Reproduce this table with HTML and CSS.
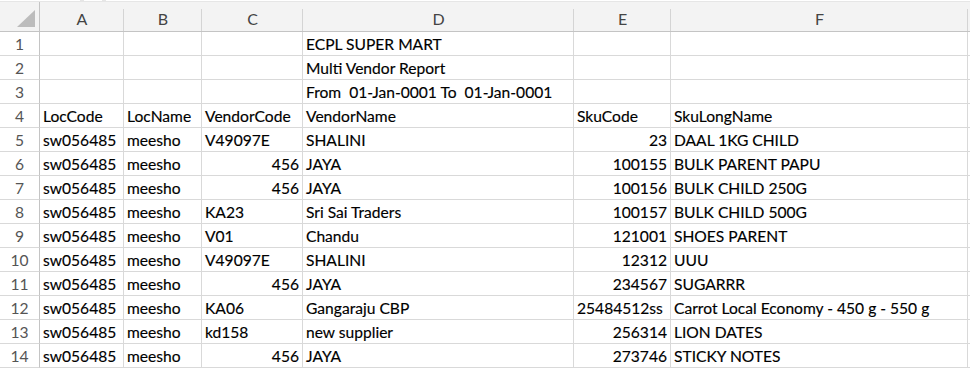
FILE: index.html
```html
<!DOCTYPE html>
<html>
<head>
<meta charset="utf-8">
<link rel="stylesheet" href="styles.css">
</head>
<body>
<div class="topstrip"><span class="tb tb1"></span><span class="tb tb2"></span><span class="tb tb3"></span></div>
<div class="sheet">
  <div class="corner"><svg width="19" height="18" viewBox="0 0 19 18"><polygon points="18,0 18,17 0,17" fill="#bcbcbc"/></svg></div>
  <div class="ch">A</div><div class="ch">B</div><div class="ch">C</div><div class="ch">D</div><div class="ch">E</div><div class="ch">F</div><div class="ch ch-last"></div>

  <div class="rh">1</div><div class="c"></div><div class="c"></div><div class="c"></div><div class="c">ECPL SUPER MART</div><div class="c"></div><div class="c"></div><div class="c g"></div>
  <div class="rh">2</div><div class="c"></div><div class="c"></div><div class="c"></div><div class="c">Multi Vendor Report</div><div class="c"></div><div class="c"></div><div class="c g"></div>
  <div class="rh">3</div><div class="c"></div><div class="c"></div><div class="c"></div><div class="c">From  01-Jan-0001 To  01-Jan-0001</div><div class="c"></div><div class="c"></div><div class="c g"></div>
  <div class="rh">4</div><div class="c">LocCode</div><div class="c">LocName</div><div class="c">VendorCode</div><div class="c">VendorName</div><div class="c">SkuCode</div><div class="c">SkuLongName</div><div class="c g"></div>
  <div class="rh">5</div><div class="c">sw056485</div><div class="c">meesho</div><div class="c">V49097E</div><div class="c">SHALINI</div><div class="c n">23</div><div class="c">DAAL 1KG CHILD</div><div class="c g"></div>
  <div class="rh">6</div><div class="c">sw056485</div><div class="c">meesho</div><div class="c n">456</div><div class="c">JAYA</div><div class="c n">100155</div><div class="c">BULK PARENT PAPU</div><div class="c g"></div>
  <div class="rh">7</div><div class="c">sw056485</div><div class="c">meesho</div><div class="c n">456</div><div class="c">JAYA</div><div class="c n">100156</div><div class="c">BULK CHILD 250G</div><div class="c g"></div>
  <div class="rh">8</div><div class="c">sw056485</div><div class="c">meesho</div><div class="c">KA23</div><div class="c">Sri Sai Traders</div><div class="c n">100157</div><div class="c">BULK CHILD 500G</div><div class="c g"></div>
  <div class="rh">9</div><div class="c">sw056485</div><div class="c">meesho</div><div class="c">V01</div><div class="c">Chandu</div><div class="c n">121001</div><div class="c">SHOES PARENT</div><div class="c g"></div>
  <div class="rh">10</div><div class="c">sw056485</div><div class="c">meesho</div><div class="c">V49097E</div><div class="c">SHALINI</div><div class="c n">12312</div><div class="c">UUU</div><div class="c g"></div>
  <div class="rh">11</div><div class="c">sw056485</div><div class="c">meesho</div><div class="c n">456</div><div class="c">JAYA</div><div class="c n">234567</div><div class="c">SUGARRR</div><div class="c g"></div>
  <div class="rh">12</div><div class="c">sw056485</div><div class="c">meesho</div><div class="c">KA06</div><div class="c">Gangaraju CBP</div><div class="c">25484512ss</div><div class="c">Carrot Local Economy - 450 g - 550 g</div><div class="c g"></div>
  <div class="rh">13</div><div class="c">sw056485</div><div class="c">meesho</div><div class="c">kd158</div><div class="c">new supplier</div><div class="c n">256314</div><div class="c">LION DATES</div><div class="c g"></div>
  <div class="rh">14</div><div class="c">sw056485</div><div class="c">meesho</div><div class="c n">456</div><div class="c">JAYA</div><div class="c n">273746</div><div class="c">STICKY NOTES</div><div class="c g"></div>
</div>
</body>
</html>
```
FILE: styles.css
```css
html, body {
  margin: 0;
  padding: 0;
  background: #ffffff;
  overflow: hidden;
}
body {
  font-family: Lato, "Liberation Sans", sans-serif;
  font-size: 15.6px;
  color: #000;
}
.topstrip {
  height: 2px;
  display: flex;
  gap: 4px;
  background: #e6e6e6;
}
.tb {
  height: 1px;
  background: #fff;
}
.tb1 { width: 80px; }
.tb2 { width: 18px; }
.tb3 { flex: 1; }
.sheet {
  display: grid;
  grid-template-columns: 40px 84px 78px 101px 271px 97px 297px 1fr;
  grid-auto-rows: 24px;
  grid-template-rows: 30px;
  width: 970px;
}
.corner {
  background: #f3f3f3;
  border-bottom: 1px solid #c4c4c4;
  border-right: 1px solid #c4c4c4;
  box-sizing: border-box;
  display: flex;
  justify-content: flex-end;
  align-items: flex-start;
  padding: 8px 3px 0 0;
}
.corner svg { display: block; }
.ch {
  background-color: #f3f3f3;
  background-image: linear-gradient(#d4d4d4, #d4d4d4);
  background-size: 1px 22px;
  background-position: right bottom;
  background-repeat: no-repeat;
  border-bottom: 1px solid #c4c4c4;
  box-sizing: border-box;
  display: flex;
  justify-content: center;
  align-items: flex-end;
  padding-bottom: 3px;
  color: #444;
  font-size: 16px;
  line-height: 18px;
}
.ch-last { background-image: none; }
.rh {
  background: #ffffff;
  border-right: 1px solid #c4c4c4;
  border-bottom: 1px solid #d9d9d9;
  box-sizing: border-box;
  display: flex;
  justify-content: center;
  align-items: flex-end;
  padding-bottom: 2px;
  color: #555;
  line-height: 18px;
}
.c {
  border-right: 1px solid #d9d9d9;
  border-bottom: 1px solid #d9d9d9;
  box-sizing: border-box;
  display: flex;
  align-items: flex-end;
  padding: 0 3px 2px 3px;
  line-height: 18px;
  white-space: pre;
  overflow: visible;
  -webkit-text-stroke: 0.15px #000;
}
.c.n { justify-content: flex-end; padding-right: 3px; }
.c.g { border-right: none; }
```
